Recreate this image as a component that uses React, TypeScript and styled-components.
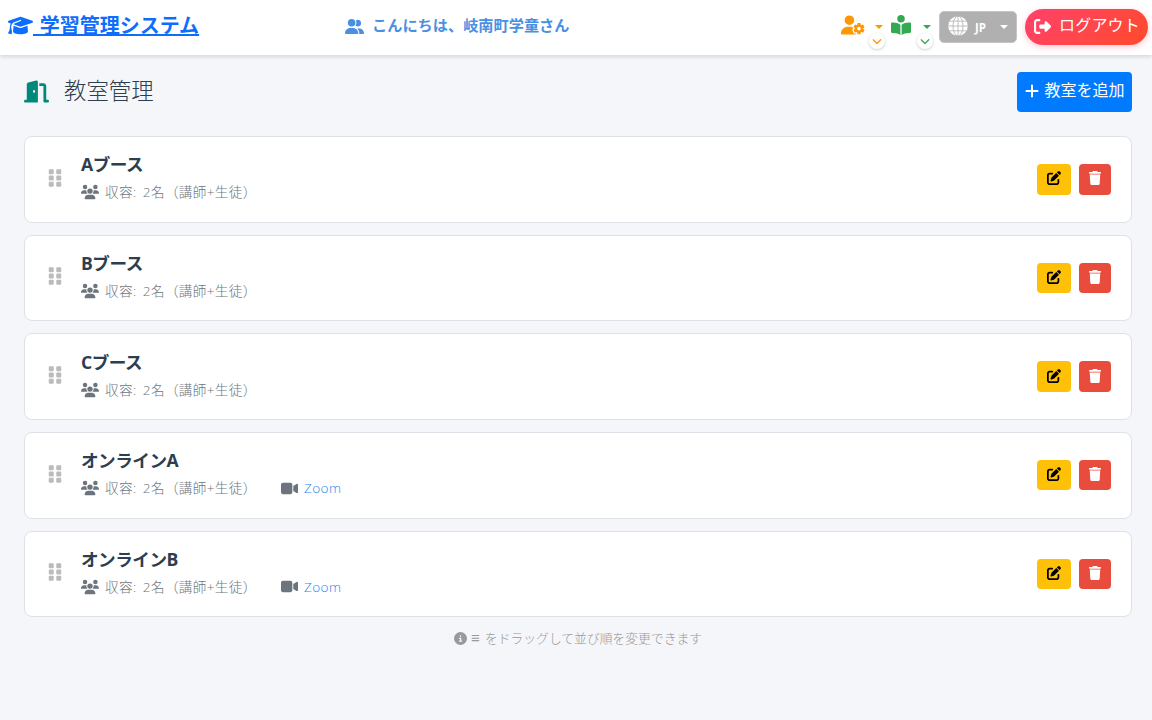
import React from "react";
import styled, { createGlobalStyle } from "styled-components";
import {
  FaGraduationCap, FaDoorOpen, FaUserGroup, FaUserGear, FaBookOpenReader,
  FaRightFromBracket, FaPlus, FaUsers, FaPenToSquare, FaTrash,
  FaVideo, FaCircleInfo, FaChevronDown,
} from "react-icons/fa6";
import { FaGripVertical } from "react-icons/fa";

const Global = createGlobalStyle`
  *, *::before, *::after { box-sizing: border-box; }
  body {
    margin: 0;
    background: #f4f6fa;
    color: #2c3e50;
    font-family: "Open Sans", "Noto Sans CJK JP", sans-serif;
    font-size: 16px;
  }
  button { font: inherit; border: 0; padding: 0; cursor: pointer; }
  svg { display: block; flex: none; }
`;

const Header = styled.header`
  display: flex;
  align-items: center;
  height: 55px;
  padding: 0 4px 2px 8px;
  background: #fff;
  box-shadow: 0 2px 4px rgba(0, 0, 0, 0.12);
`;

const Brand = styled.a`
  display: flex;
  align-items: center;
  width: 337px;
  padding-bottom: 2px;
  color: #0d6efd;
  font-size: 20px;
  font-weight: 700;
  line-height: 24px;
`;

const BrandText = styled.span`
  white-space: pre;
  word-spacing: 1.5px;
  text-decoration: underline;
  text-decoration-thickness: 2px;
  text-underline-offset: 1px;
`;

const Greeting = styled.div`
  display: flex;
  align-items: center;
  gap: 8px;
  flex: 1;
  color: #4a90e2;
  font-size: 15.2px;
  font-weight: 700;
  line-height: 20px;
  span { padding-bottom: 4px; }
`;

const Nav = styled.nav`
  display: flex;
  align-items: center;
`;

const MenuButton = styled.button<{ $color: string; $width: number }>`
  position: relative;
  display: flex;
  align-items: center;
  justify-content: space-between;
  width: ${(p) => p.$width}px;
  height: 24px;
  padding-left: ${(p) => p.$width - 42 ? 8 : 0}px;
  background: none;
  color: ${(p) => p.$color};
  > svg { margin-bottom: 3px; }
`;

const Caret = styled.span`
  border: 4px solid transparent;
  border-top-color: currentColor;
  border-bottom: 0;
`;

const Badge = styled.span`
  position: absolute;
  right: -2px;
  bottom: -10px;
  display: flex;
  align-items: center;
  justify-content: center;
  width: 16px;
  height: 16px;
  border-radius: 50%;
  background: #fff;
  box-shadow: 0 1px 3px rgba(0, 0, 0, 0.2);
`;

const Language = styled.button`
  display: flex;
  align-items: center;
  width: 78px;
  height: 32px;
  margin: 0 8px;
  padding: 0 8px;
  border: 1px solid #c4c4c4;
  border-radius: 5px;
  background: #b0b0b0;
  color: #fff;
  font-size: 11.5px;
  font-weight: 700;
  > svg { margin-bottom: 2px; }
`;

const LanguageCode = styled.span`
  flex: 1;
  padding: 1px 0 0 7px;
  text-align: left;
`;

const Logout = styled.button`
  display: flex;
  align-items: center;
  gap: 8px;
  width: 123px;
  height: 36px;
  padding: 0 0 0 9px;
  border-radius: 18px;
  background: linear-gradient(135deg, #ff416c, #ff4b2b);
  box-shadow: 0 2px 6px rgba(255, 65, 108, 0.3);
  color: #fff;
  white-space: nowrap;
`;

const LogoutText = styled.span`
  line-height: 20px;
  padding-bottom: 3px;
  letter-spacing: 0.2px;
`;

const Main = styled.main`
  padding: 17px 20px 0 24px;
`;

const TitleBar = styled.div`
  display: flex;
  align-items: center;
  justify-content: space-between;
  height: 40px;
  margin-bottom: 24px;
`;

const Title = styled.h1`
  display: flex;
  align-items: center;
  gap: 15px;
  margin: 0;
  padding-bottom: 2px;
  font-size: 22.4px;
  font-weight: 300;
  line-height: 30px;
  svg { color: #00897b; }
`;

const AddButton = styled.button`
  display: flex;
  align-items: center;
  justify-content: center;
  gap: 4px;
  width: 115px;
  height: 40px;
  border-radius: 4px;
  background: #007bff;
  color: #fff;
  line-height: 20px;
  > svg { margin-bottom: 2px; }
  > span { padding-bottom: 4px; }
`;

const RoomList = styled.ul`
  display: grid;
  gap: 12px;
  margin: 0;
  padding: 0;
  list-style: none;
`;

const Card = styled.li`
  display: flex;
  align-items: center;
  height: 86.65px;
  padding: 0 20px;
  border: 1px solid #dee2e6;
  border-radius: 8px;
  background: #fff;
`;

const Handle = styled.span`
  width: 36px;
  padding-bottom: 3px;
  color: #bbb;
`;

const Details = styled.div`
  flex: 1;
  padding-bottom: 3px;
`;

const RoomName = styled.h2`
  margin: 0 0 4px;
  font-size: 17.6px;
  font-weight: 700;
  line-height: 25px;
  letter-spacing: -0.5px;
`;

const Meta = styled.div`
  display: flex;
  gap: 30px;
  color: #6c757d;
  font-size: 13.6px;
  font-weight: 300;
  line-height: 22px;
`;

const MetaItem = styled.span`
  display: flex;
  align-items: center;
  gap: 6px;
`;

const Capacity = styled.span`
  width: 146px;
  white-space: nowrap;
  letter-spacing: 0.35px;
  word-spacing: 2.5px;
`;

const ZoomLink = styled.a`
  color: #1e88f0;
  letter-spacing: 0.4px;
`;

const ActionButton = styled.button<{ $kind: "edit" | "delete" }>`
  display: flex;
  align-items: center;
  justify-content: center;
  width: ${(p) => (p.$kind === "edit" ? 34 : 32)}px;
  height: 30.5px;
  margin-left: ${(p) => (p.$kind === "edit" ? 0 : 8)}px;
  padding-bottom: 2px;
  border-radius: 4px;
  background: ${(p) => (p.$kind === "edit" ? "#ffc107" : "#e74c3c")};
  color: ${(p) => (p.$kind === "edit" ? "#000" : "#fff")};
`;

const Hint = styled.p`
  display: flex;
  align-items: center;
  justify-content: center;
  gap: 4px;
  margin: 11px 0 0;
  color: #999;
  font-size: 12.8px;
  font-weight: 300;
  line-height: 20px;
`;

const DragMark = styled.span`
  font-family: "Liberation Sans", sans-serif;
  font-size: 15px;
  width: 10px;
`;

const Globe = () => (
  <svg width="20" height="20" viewBox="0 0 20 20" fill="none">
    <circle cx="10" cy="10" r="9.8" fill="#fff" />
    <g stroke="#b0b0b0" strokeWidth="0.8">
      <ellipse cx="10" cy="10" rx="5" ry="10" />
      <path d="M10 0v20M0 10h20M1.5 5.2h17M1.5 14.8h17" />
    </g>
  </svg>
);

const rooms = [
  { name: "Aブース", online: false },
  { name: "Bブース", online: false },
  { name: "Cブース", online: false },
  { name: "オンラインA", online: true },
  { name: "オンラインB", online: true },
];

export default function App() {
  return (
    <>
      <Global />
      <Header>
        <Brand>
          <FaGraduationCap size={25} />
          <BrandText> 学習管理システム</BrandText>
        </Brand>
        <Greeting>
          <FaUserGroup size={19} />
          <span>こんにちは、岐南町学童さん</span>
        </Greeting>
        <Nav>
          <MenuButton $color="#ff9800" $width={42}>
            <FaUserGear size={24} />
            <Caret />
            <Badge><FaChevronDown size={10} /></Badge>
          </MenuButton>
          <MenuButton $color="#34a853" $width={48}>
            <FaBookOpenReader size={20} />
            <Caret />
            <Badge><FaChevronDown size={10} /></Badge>
          </MenuButton>
          <Language>
            <Globe />
            <LanguageCode>JP</LanguageCode>
            <Caret />
          </Language>
          <Logout>
            <FaRightFromBracket size={17} />
            <LogoutText>ログアウト</LogoutText>
          </Logout>
        </Nav>
      </Header>
      <Main>
        <TitleBar>
          <Title><FaDoorOpen size={25} />教室管理</Title>
          <AddButton><FaPlus size={16} /><span>教室を追加</span></AddButton>
        </TitleBar>
        <RoomList>
          {rooms.map((room) => (
            <Card key={room.name}>
              <Handle><FaGripVertical size={20} /></Handle>
              <Details>
                <RoomName>{room.name}</RoomName>
                <Meta>
                  <MetaItem>
                    <FaUsers size={18} />
                    <Capacity>収容: 2名（講師+生徒）</Capacity>
                  </MetaItem>
                  {room.online && (
                    <MetaItem>
                      <FaVideo size={17} />
                      <ZoomLink>Zoom</ZoomLink>
                    </MetaItem>
                  )}
                </Meta>
              </Details>
              <ActionButton $kind="edit" aria-label="編集"><FaPenToSquare size={14} /></ActionButton>
              <ActionButton $kind="delete" aria-label="削除"><FaTrash size={14} /></ActionButton>
            </Card>
          ))}
        </RoomList>
        <Hint>
          <FaCircleInfo size={13} />
          <DragMark>≡</DragMark>
          <span>をドラッグして並び順を変更できます</span>
        </Hint>
      </Main>
    </>
  );
}
